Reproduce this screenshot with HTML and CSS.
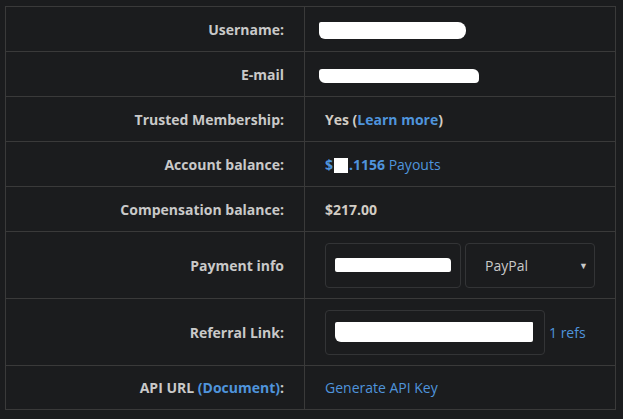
FILE: index.html
```html
<!DOCTYPE html>
<html lang="en">
<head>
    <meta charset="UTF-8">
    <meta name="viewport" content="width=device-width, initial-scale=1.0">
    <title>Account</title>
    <link rel="stylesheet" href="styles.css">
</head>
<body>
    <div class="page">
        <table class="account">
            <tr>
                <th>Username:</th>
                <td><span class="blot blot-user"></span></td>
            </tr>
            <tr>
                <th>E-mail</th>
                <td><span class="blot blot-mail"></span></td>
            </tr>
            <tr>
                <th>Trusted Membership:</th>
                <td><b>Yes (<a href="#">Learn more</a>)</b></td>
            </tr>
            <tr>
                <th>Account balance:</th>
                <td><a href="#" class="bal"><b>$<span class="blot blot-bal"></span>.1156</b> Payouts</a></td>
            </tr>
            <tr>
                <th>Compensation balance:</th>
                <td><b>$217.00</b></td>
            </tr>
            <tr class="tall">
                <th>Payment info</th>
                <td>
                    <div class="pay">
                        <div class="field field-pay"><span class="blot blot-pay"></span></div>
                        <div class="field field-select">
                            <span>PayPal</span>
                            <span class="caret">&#9660;</span>
                        </div>
                    </div>
                </td>
            </tr>
            <tr class="tall">
                <th>Referral Link:</th>
                <td>
                    <div class="pay">
                        <div class="field field-ref"><span class="blot blot-ref"></span></div>
                        <a href="#">1 refs</a>
                    </div>
                </td>
            </tr>
            <tr class="last">
                <th>API URL <a href="#">(Document)</a>:</th>
                <td><a href="#">Generate API Key</a></td>
            </tr>
        </table>
    </div>
</body>
</html>
```

FILE: styles.css
```css
body {
    margin: 0;
    background: #1b1c1e;
    color: #cfcfcf;
    font-family: "Open Sans", "Liberation Sans", sans-serif;
    font-size: 14px;
}
.page {
    padding: 6px 7px 10px 5px;
}
.account {
    width: 100%;
    border-collapse: collapse;
    border: 1px solid #3a3a3a;
}
.account th,
.account td {
    border: 1px solid #3a3a3a;
    height: 45px;
    padding: 0 20px;
    box-sizing: border-box;
}
.account th {
    width: 302px;
    text-align: right;
    font-weight: 700;
    color: #c9c9c9;
}
.account td {
    text-align: left;
}
.account tr.tall th,
.account tr.tall td {
    height: 67px;
}
.account tr.last th,
.account tr.last td {
    height: 44px;
}
a {
    color: #4f94dc;
    text-decoration: none;
}
b {
    font-weight: 700;
    color: #d2ccc4;
}
.bal b {
    color: #4f94dc;
}
/* 塗りつぶされた部分 */
.blot {
    display: inline-block;
    background: #fff;
    vertical-align: middle;
}
.blot-user {
    width: 147px;
    height: 17px;
    margin-left: -6px;
    border-radius: 2px 8px 8px 6px;
}
.blot-mail {
    width: 160px;
    height: 14px;
    margin-left: -6px;
    border-radius: 3px 6px 4px 6px;
}
.blot-bal {
    width: 14px;
    height: 15px;
    margin: 0 1px;
    vertical-align: -3px;
}
.pay {
    display: flex;
    align-items: center;
    gap: 4px;
}
.field {
    height: 45px;
    box-sizing: border-box;
    border: 1px solid #333436;
    border-radius: 4px;
    display: flex;
    align-items: center;
}
.field-pay {
    width: 136px;
    padding-left: 9px;
}
.blot-pay {
    width: 116px;
    height: 14px;
    border-radius: 2px 4px 2px 2px;
}
.field-select {
    width: 130px;
    padding: 0 6px 0 19px;
    justify-content: space-between;
    color: #c9c9c9;
}
.caret {
    font-size: 9px;
    color: #c9c9c9;
}
.field-ref {
    width: 220px;
    padding-left: 9px;
}
.blot-ref {
    width: 198px;
    height: 20px;
    border-radius: 2px 1px 2px 6px;
}
```
